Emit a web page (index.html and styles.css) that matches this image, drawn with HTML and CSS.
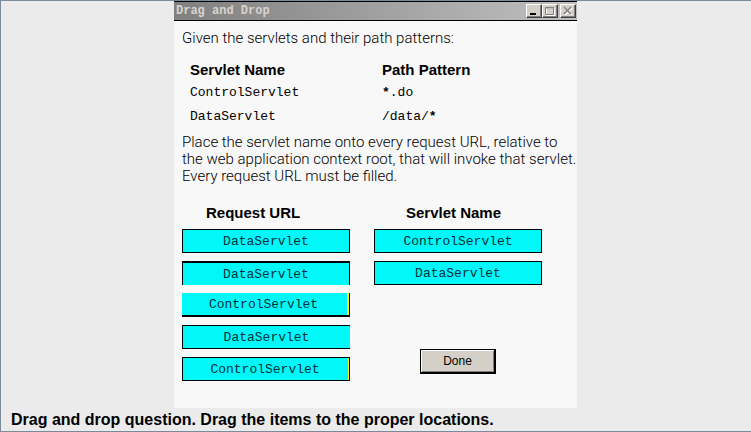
FILE: index.html
```html
<!DOCTYPE html>
<html lang="en">
<head>
<meta charset="utf-8">
<title>Drag and Drop</title>
<link rel="stylesheet" href="styles.css">
</head>
<body>
<main class="page">
  <section class="window">
    <header class="titlebar">
      <h1 class="title">Drag and Drop</h1>
      <div class="controls">
        <button class="control" type="button" aria-label="Minimize"><svg width="14" height="12" viewBox="0 0 14 12"><path d="M3 8h6v2H3z" fill="#000"/></svg></button>
        <button class="control" type="button" aria-label="Maximize"><svg width="14" height="12" viewBox="0 0 14 12" fill="none"><path d="M3.500 3.500h8v7h-8z" stroke="#fff"/><path d="M2.500 2.500h8v7h-8zM2.500 3h8" stroke="#808080"/></svg></button>
        <button class="control control-close" type="button" aria-label="Close"><svg width="14" height="12" viewBox="0 0 14 12" fill="none"><path d="M4 3l7 7M11 3l-7 7" stroke="#fff" stroke-width="1.500"/><path d="M3 2l7 7M10 2l-7 7" stroke="#808080" stroke-width="1.500"/></svg></button>
      </div>
    </header>
    <div class="content">
      <p class="text">Given the servlets and their path patterns:</p>
      <table class="patterns">
        <thead><tr><th>Servlet Name</th><th>Path Pattern</th></tr></thead>
        <tbody>
          <tr><td>ControlServlet</td><td><b>*</b>.do</td></tr>
          <tr><td>DataServlet</td><td>/data/<b>*</b></td></tr>
        </tbody>
      </table>
      <p class="text">Place the servlet name onto every request URL, relative to<br>the web application context root, that will invoke that servlet.<br>Every request URL must be filled.</p>
      <div class="board">
        <div class="column">
          <h2 class="heading">Request URL</h2>
          <button class="tile" type="button">DataServlet</button>
          <button class="tile tile-open-bottom" type="button">DataServlet</button>
          <button class="tile tile-open-left" type="button">ControlServlet</button>
          <button class="tile tile-open-right" type="button">DataServlet</button>
          <button class="tile tile-edge" type="button">ControlServlet</button>
        </div>
        <div class="column">
          <h2 class="heading">Servlet Name</h2>
          <button class="tile" type="button">ControlServlet</button>
          <button class="tile" type="button">DataServlet</button>
          <button class="done" type="button">Done</button>
        </div>
      </div>
    </div>
  </section>
  <p class="caption">Drag and drop question. Drag the items to the proper locations.</p>
</main>
</body>
</html>
```
FILE: styles.css
```css
* {
  box-sizing: border-box;
}

body {
  margin: 0;
  background: #ebebeb;
  color: #000;
  font-family: "Liberation Sans", Arial, sans-serif;
}

h1, h2, p {
  margin: 0;
}

button {
  padding: 0;
  border-radius: 0;
  color: #000;
}

.page {
  display: flex;
  flex-direction: column;
  min-height: 100vh;
  padding-right: 1px;
  border: 1px solid #7b8a9b;
  border-right: 0;
}

.window {
  width: 100%;
  max-width: 403px;
  margin: 0 auto;
  padding-bottom: 27px;
  background: #f8f8f8;
}

.titlebar {
  display: flex;
  align-items: center;
  justify-content: space-between;
  height: 20px;
  padding: 0 1px 0 2px;
  border: solid #000;
  border-width: 1px 0;
  background: linear-gradient(90deg, #808080, #c0c0c0);
}

.title {
  color: #d8d5cc;
  font: bold 12px/18px "Liberation Mono", monospace;
}

.controls {
  display: flex;
}

.control {
  display: flex;
  width: 16px;
  height: 14px;
  border: 1px solid;
  border-color: #fff #404040 #404040 #fff;
  background: #d4d0c8;
  box-shadow: inset -1px -1px #808080;
}

.control-close {
  margin-left: 2px;
}

.content {
  padding: 9px 8px 0;
}

.text {
  font: 300 15px/17px Roboto, "Liberation Sans", sans-serif;
  white-space: nowrap;
}

.patterns {
  width: 100%;
  margin: 12px 0 5px;
  border-collapse: collapse;
  table-layout: fixed;
}

.patterns th,
.patterns td {
  height: 24px;
  padding: 0 0 0 8px;
  text-align: left;
}

.patterns th {
  height: 22px;
  font-size: 15px;
  line-height: 20px;
}

.patterns th:first-child {
  width: 192px;
}

.patterns td {
  font: 13px/20px "Liberation Mono", monospace;
}

.board {
  display: grid;
  grid-template-columns: 168px 168px;
  column-gap: 24px;
  margin-top: 20px;
}

.column {
  display: flex;
  flex-direction: column;
  gap: 8px;
}

.heading {
  padding-left: 24px;
  font-size: 15px;
  line-height: 16px;
}

.column + .column .heading {
  padding-left: 32px;
}

.tile {
  height: 24px;
  padding-top: 1px;
  border: 1px solid #000;
  background: #00f8f8;
  color: #003038;
  font: 13px/20px "Liberation Mono", monospace;
}

.tile-open-bottom {
  border-width: 2px 1px 0;
}

.tile-open-left {
  padding-right: 4px;
  border-width: 0 1px 2px 0;
  box-shadow: inset -2px 0 #ff0;
}

.tile-open-right {
  border-right: 0;
}

.tile-edge {
  padding-right: 2px;
  box-shadow: inset -1px 0 #ff0;
}

.done {
  align-self: center;
  width: 76px;
  height: 25px;
  margin-top: 56px;
  border: solid #000;
  border-width: 1px 2px 2px 1px;
  background: #d4d0c8;
  box-shadow: inset 1px 1px #fff, inset -1px -1px #808080;
  font: 12px/16px "Liberation Sans", Arial, sans-serif;
}

.caption {
  padding: 2px 10px;
  font-size: 16px;
  font-weight: bold;
  line-height: 19px;
}
```
